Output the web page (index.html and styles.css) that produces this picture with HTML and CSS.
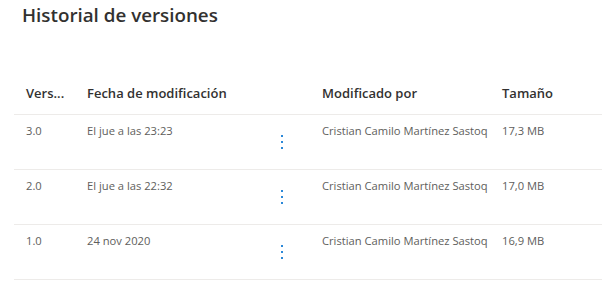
FILE: index.html
```html
<!DOCTYPE html>
<html>
<head>
    <title>Historial de versiones</title>
    <link rel="stylesheet" href="styles.css">
</head>
<body>
    <div class="panel">
        <h1 class="panel-title">Historial de versiones</h1>

        <div class="version-list">
            <!-- Cabecera -->
            <div class="row header-row">
                <div class="cell">Vers...</div>
                <div class="cell span-2">Fecha de modificación</div>
                <div class="cell">Modificado por</div>
                <div class="cell">Tamaño</div>
            </div>

            <div class="row">
                <div class="cell">3.0</div>
                <div class="cell">El jue a las 23:23</div>
                <div class="more"><span class="dot"></span><span class="dot"></span><span class="dot"></span></div>
                <div class="cell clip">Cristian Camilo Martínez Sastoq</div>
                <div class="cell">17,3 MB</div>
            </div>

            <div class="row">
                <div class="cell">2.0</div>
                <div class="cell">El jue a las 22:32</div>
                <div class="more"><span class="dot"></span><span class="dot"></span><span class="dot"></span></div>
                <div class="cell clip">Cristian Camilo Martínez Sastoq</div>
                <div class="cell">17,0 MB</div>
            </div>

            <div class="row">
                <div class="cell">1.0</div>
                <div class="cell">24 nov 2020</div>
                <div class="more"><span class="dot"></span><span class="dot"></span><span class="dot"></span></div>
                <div class="cell clip">Cristian Camilo Martínez Sastoq</div>
                <div class="cell">16,9 MB</div>
            </div>
        </div>
    </div>
</body>
</html>
```

FILE: styles.css
```css
:root {
    --text: #323130;
    --text-soft: #605e5c;
    --divider: #edebe9;
    --accent: #2b88d8;
}

body {
    margin: 0;
    background: #fff;
    font-family: 'Open Sans', 'Noto Sans', sans-serif;
    color: var(--text);
}

.panel {
    padding: 2px 0 0 14px;
}

.panel-title {
    margin: 0 0 0 8px;
    font-size: 18.8px;
    font-weight: 600;
    line-height: 26px;
}

.version-list {
    margin-top: 52px;
}

.row {
    display: grid;
    grid-template-columns: 61px 183px 52px 180px 1fr;
    padding-left: 12px;
    height: 54px;
    border-bottom: 1px solid var(--divider);
    font-size: 11.2px;
    color: var(--text-soft);
}

.row .cell {
    padding-top: 8px;
    line-height: 16px;
}

.header-row {
    height: 34px;
    font-size: 13px;
    font-weight: 600;
    color: var(--text);
}

.header-row .cell {
    padding-top: 3px;
    line-height: 20px;
}

.span-2 {
    grid-column: span 2;
}

.clip {
    overflow: hidden;
    white-space: nowrap;
    margin-right: 8px;
}

.more {
    width: 24px;
    align-self: center;
    display: flex;
    flex-direction: column;
    align-items: center;
    gap: 4px;
}

.dot {
    width: 2px;
    height: 2px;
    background: var(--accent);
}
```
